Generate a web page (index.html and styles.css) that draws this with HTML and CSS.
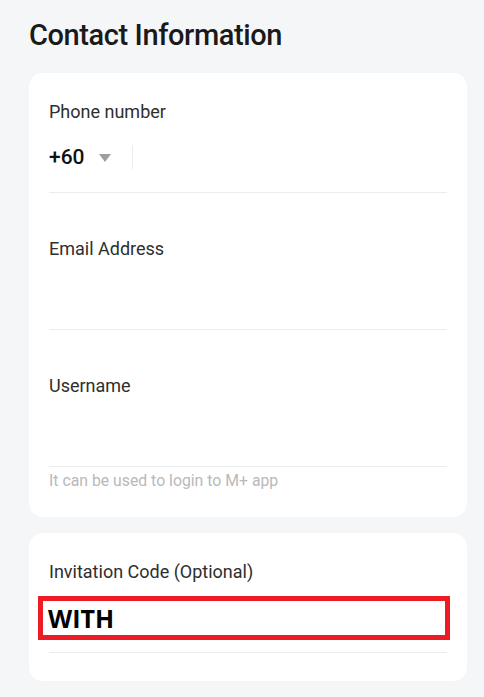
FILE: index.html
```html
<!DOCTYPE html>
<html lang="en">
<head>
<meta charset="utf-8">
<title>Contact Information</title>
<link rel="stylesheet" href="styles.css">
</head>
<body>
<main class="page">
  <h1 class="title">Contact Information</h1>

  <section class="card">
    <div class="field">
      <label class="label">Phone number</label>
      <div class="input-row">
        <span class="code">+60</span>
        <svg class="caret" width="12" height="8" viewBox="0 0 12 8"><path d="M0 0H12L6 8Z" fill="#9e9e9e"/></svg>
        <span class="divider"></span>
      </div>
    </div>
    <div class="field">
      <label class="label">Email Address</label>
      <div class="input-row"></div>
    </div>
    <div class="field">
      <label class="label">Username</label>
      <div class="input-row"></div>
    </div>
    <p class="hint">It can be used to login to M+ app</p>
  </section>

  <section class="card card-second">
    <div class="field">
      <label class="label">Invitation Code (Optional)</label>
      <div class="input-row input-marked">
        <div class="mark">WITH</div>
      </div>
    </div>
  </section>
</main>
</body>
</html>
```

FILE: styles.css
```css
html, body {
  margin: 0;
  padding: 0;
  background: #f5f6f8;
}

.page {
  padding: 18px 17px 16px 29px;
  font-family: Roboto, "Liberation Sans", sans-serif;
}

.title {
  margin: 0 0 21px;
  font-size: 29px;
  line-height: 34px;
  font-weight: 500;
  color: #1a1a1a;
  letter-spacing: -0.4px;
}

.card {
  background: #ffffff;
  border-radius: 14px;
  padding: 28px 20px 26px;
}

.card-second {
  margin-top: 16px;
  padding-bottom: 28px;
}

.field {
  border-bottom: 1px solid #ececec;
  padding-bottom: 23px;
}

.field + .field {
  margin-top: 45px;
}

.label {
  display: block;
  font-size: 18px;
  line-height: 22px;
  color: #2e2e2e;
}

.input-row {
  margin-top: 22px;
  height: 24px;
  display: flex;
  align-items: center;
}

.code {
  font-size: 21px;
  font-weight: 500;
  color: #111;
  line-height: 24px;
}

.caret {
  margin-left: 14px;
  margin-top: 1px;
}

.divider {
  width: 1px;
  height: 24px;
  background: #ececec;
  margin-left: 21px;
}

.hint {
  margin: 4px 0 0;
  font-size: 15.8px;
  line-height: 20px;
  color: #b9b9b9;
}

.input-marked {
  position: relative;
}

.mark {
  position: absolute;
  left: -11px;
  top: -9px;
  width: 397px;
  height: 34px;
  border: 5px solid #ed1c24;
  background: #fff;
  font-family: "Open Sans", "Liberation Sans", sans-serif;
  font-weight: 700;
  font-size: 25px;
  line-height: 34px;
  padding-left: 5px;
  color: #000;
}
```
